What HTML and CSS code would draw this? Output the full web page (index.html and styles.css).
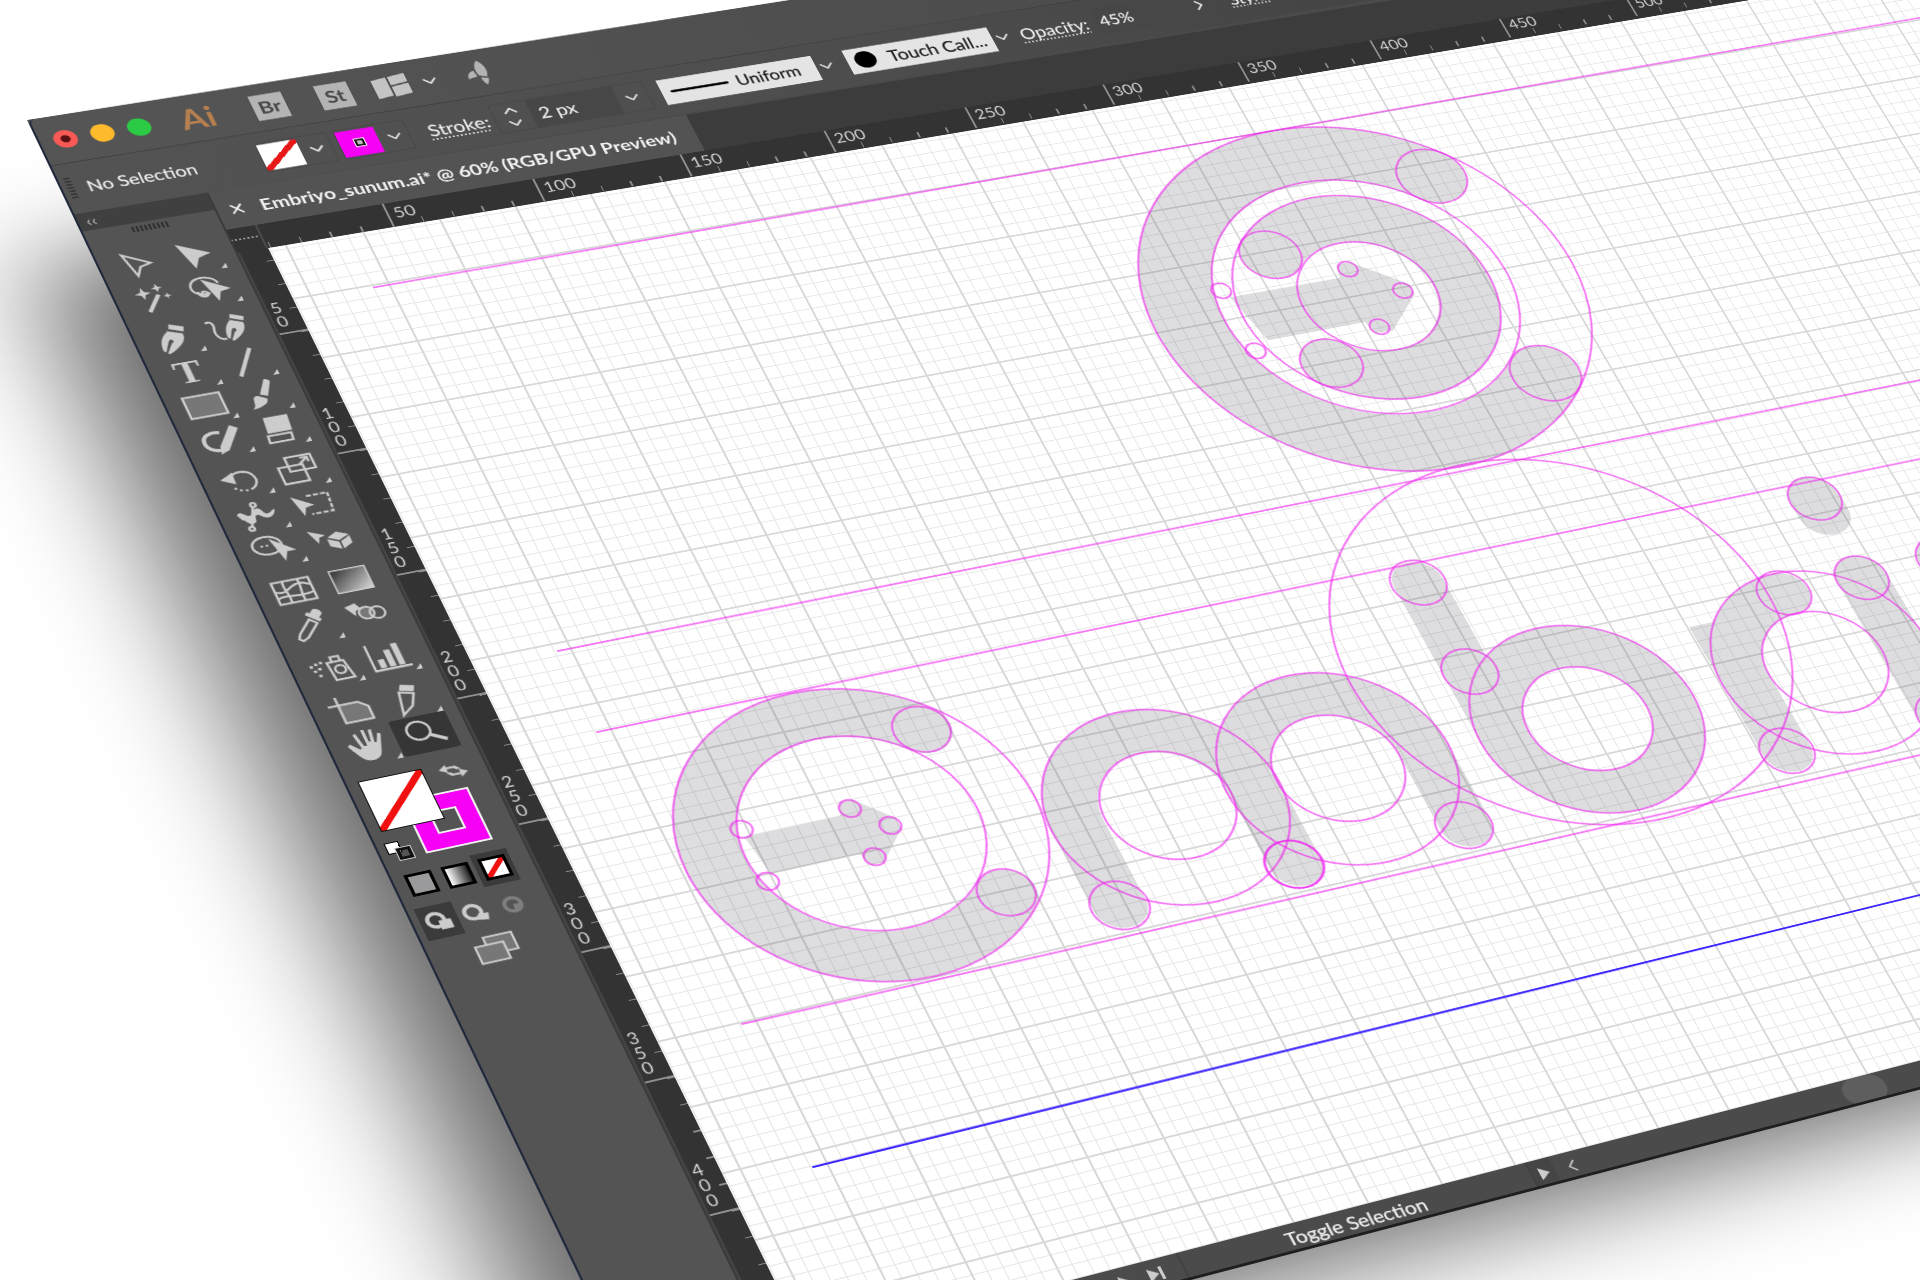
FILE: index.html
```html
<!DOCTYPE html>
<html lang="en">
<head>
    <meta charset="UTF-8">
    <meta name="viewport" content="width=device-width, initial-scale=1.0">
    <title>Embriyo_sunum.ai* @ 60% (RGB/GPU Preview)</title>
    <link rel="stylesheet" href="styles.css">
</head>
<body>
<div class="window">

    <!-- application bar -->
    <div class="appbar">
        <div class="lights"><i class="light red"></i><i class="light yellow"></i><i class="light green"></i></div>
        <div class="ai-logo">Ai</div>
        <div class="app-box br">Br</div>
        <div class="app-box st">St</div>
        <svg class="workspace" viewBox="0 0 36 30"><path d="M1 4l15-2v24l-15 2zM18 2l17-2v11l-17 2zM18 15l17-2v13l-17 2z"/></svg>
        <svg class="chev ws-chev" viewBox="0 0 14 8"><path d="M1 1l6 6 6-6"/></svg>
        <svg class="rocket" viewBox="0 0 28 34"><path d="M18 1c6 6 7 15 3 22l-7-3c-2-7-1-14 4-19zM12 21l-9 2c0-6 3-9 8-10zM15 23l7 2c-1 3-2 6-4 8-2-3-3-6-3-10z"/></svg>
    </div>

    <!-- control bar -->
    <div class="controlbar">
        <div class="grip"></div>
        <div class="ctl-label no-sel">No Selection</div>
        <div class="ctl-group g-fill">
            <div class="swatch-none"></div>
            <svg class="chev" viewBox="0 0 14 8"><path d="M1 1l6 6 6-6"/></svg>
        </div>
        <div class="ctl-group g-stroke">
            <div class="swatch-stroke"><i></i></div>
            <svg class="chev" viewBox="0 0 14 8"><path d="M1 1l6 6 6-6"/></svg>
        </div>
        <div class="ctl-label stroke-label dotted">Stroke:</div>
        <div class="ctl-group g-weight">
            <div class="stepper">
                <svg class="chev" viewBox="0 0 14 8"><path d="M1 7l6-6 6 6"/></svg>
                <svg class="chev" viewBox="0 0 14 8"><path d="M1 1l6 6 6-6"/></svg>
            </div>
            <div class="input">2 px</div>
            <svg class="chev" viewBox="0 0 14 8"><path d="M1 1l6 6 6-6"/></svg>
        </div>
        <div class="dropdown uniform"><i class="profile"></i><span>Uniform</span></div>
        <svg class="chev drop-chev" viewBox="0 0 14 8"><path d="M1 1l6 6 6-6"/></svg>
        <div class="dropdown touch"><i class="dot"></i><span>Touch Call...</span></div>
        <svg class="chev drop-chev" viewBox="0 0 14 8"><path d="M1 1l6 6 6-6"/></svg>
        <div class="ctl-label opacity-label dotted">Opacity:</div>
        <div class="input opacity-input">45%</div>
        <svg class="chev-right" viewBox="0 0 8 14"><path d="M1 1l6 6-6 6"/></svg>
        <div class="ctl-label style-label dotted">Style:</div>
    </div>

    <div class="main">

        <!-- tools panel -->
        <div class="toolbar">
            <div class="panel-head">&lsaquo;&lsaquo;</div>
            <div class="panel-grip"></div>

            <div class="tool-group first">
                <div class="tool"><svg viewBox="0 0 40 40"><path class="line" d="M9 5l24 15-11 3-6 11z"/></svg></div>
                <div class="tool more"><svg viewBox="0 0 40 40"><path d="M7 3l30 17-13 4-7 13z"/></svg></div>
                <div class="tool"><svg viewBox="0 0 40 40"><path class="line thick" d="M11 37l15-20"/><path d="M12 5l2 6 6 2-6 2-2 6-2-6-6-2 6-2zM27 3l1.500 4 4 1.500-4 1.500-1.500 4-1.500-4-4-1.500 4-1.500zM34 16l1 3 3 1-3 1-1 3-1-3-3-1 3-1z"/></svg></div>
                <div class="tool more"><svg viewBox="0 0 40 40"><path class="line" d="M19 26C8 28 1 22 3 14 5 6 16 3 24 7c4 2 6 5 6 8M8 22c-2 6 5 9 8 6 2-3-1-6-4-5-2 1 0 5 4 4"/><path d="M15 7l25 17-11 2-5 12z"/></svg></div>
            </div>

            <div class="tool-group">
                <div class="tool more"><svg viewBox="0 0 40 40"><path d="M22 2l13 6-2 6-13-6zM17 10l14 6c1 7-3 14-20 23l-2-1 8-12c2 0 3-2 2-4-1-1-3-1-4 1l-7 13-2-2c0-10 4-19 13-24z"/></svg></div>
                <div class="tool"><svg viewBox="0 0 40 40"><path d="M27 2l12 6-2 5-12-6zM23 9l13 6c0 7-3 14-16 21l-2-1 6-10c2 0 3-2 2-4-1-1-3-1-4 1l-5 11-2-2c0-9 3-16 10-22z"/><path class="line" d="M0 9c6-3 8 3 6 9-2 7 1 15 8 14"/></svg></div>
                <div class="tool more"><span class="type-glyph">T</span></div>
                <div class="tool more"><svg viewBox="0 0 40 40"><path class="line thick" d="M10 37L30 4"/></svg></div>
                <div class="tool more"><svg viewBox="0 0 40 40"><rect class="shade" x="2" y="7" width="36" height="27"/></svg></div>
                <div class="tool more"><svg viewBox="0 0 40 40"><path d="M29 1c3 0 5 2 5 4L26 22l-7-3zM16 20l8 5c0 6-7 10-18 11 5-3 4-8 5-11 0-3 2-5 5-5z"/></svg></div>
                <div class="tool more"><svg viewBox="0 0 40 40"><path class="line thick" d="M22 33C11 36 3 30 3 22c0-9 9-13 18-10"/><path d="M33 5l7 5-17 25-9 4 2-10z"/></svg></div>
                <div class="tool more"><svg viewBox="0 0 40 40"><path d="M11 4h24l-2 20H9z"/><path class="line" d="M8 27h23l-1 9H7z"/></svg></div>
            </div>

            <div class="tool-group">
                <div class="tool more"><svg viewBox="0 0 40 40"><path class="line" d="M10 15c8-8 20-6 23 2 3 7-1 13-5 15"/><path class="line dashed" d="M28 32c-7 3-14 1-18-5"/><path d="M1 16l14-7-1 15z"/></svg></div>
                <div class="tool more"><svg viewBox="0 0 40 40"><rect class="line" x="13" y="3" width="25" height="18"/><rect class="line" x="3" y="14" width="24" height="21"/><path class="line" d="M24 14l9-7M27 6h7v6"/></svg></div>
                <div class="tool more"><svg viewBox="0 0 40 40"><path d="M1 17c6-6 7 3 11 3 5 0 4-8 10-7 5 1 3 8 8 8 3 0 5-4 8-4-2 6-5 9-9 9-6 0-6-6-10-5-4 1 0 8-6 9-6 1-6-7-9-6z"/><circle class="line" cx="20" cy="8" r="2.500"/><circle class="line" cx="9" cy="36" r="2.500"/><path class="line" d="M19 10L10 34"/></svg></div>
                <div class="tool"><svg viewBox="0 0 40 40"><path d="M1 7l19 14-9 2-4 10z"/><path class="line dashed-box" d="M16 9h21l-2 23H14"/></svg></div>
                <div class="tool more"><svg viewBox="0 0 40 40"><ellipse class="line" cx="15" cy="15" rx="14" ry="11"/><circle cx="10" cy="15" r="1.300"/><circle cx="15" cy="15" r="1.300"/><path d="M19 7l21 19-9 0-5 11z"/></svg></div>
                <div class="tool"><svg viewBox="0 0 44 40"><path d="M1 6l17 9-7 2-3 8z"/><path d="M30 13l12 6-12 6-11-6zM18 21l11 6v10l-11-6zM31 27l11-6v10l-11 6z"/></svg></div>
            </div>

            <div class="tool-group">
                <div class="tool"><svg viewBox="0 0 40 40"><rect class="line" x="2" y="7" width="36" height="27"/><path class="line" d="M2 18c8 5 12 0 17-3s10-5 18 1M13 7c-3 9 3 18 0 27M27 7c3 9-3 18 0 27M2 27c10-5 20 3 36-2"/></svg></div>
                <div class="tool"><svg viewBox="0 0 40 40"><defs><linearGradient id="grad-tool" x1="0" y1="0" x2="1" y2="1"><stop offset="0" stop-color="#2e2e2e"/><stop offset="1" stop-color="#d8d8d8"/></linearGradient></defs><rect class="grad-rect" x="3" y="6" width="35" height="28" fill="url(#grad-tool)"/></svg></div>
                <div class="tool more"><svg viewBox="0 0 40 40"><path d="M28 2c4-1 8 3 7 7l-4 4 2 2-3 3-11-11 3-3 2 2z"/><path class="line" d="M21 13l6 6L13 34l-6 3-3-3 3-6z"/></svg></div>
                <div class="tool"><svg viewBox="0 0 44 40"><path d="M2 6l12-3 4 8-6 2-2 7z"/><circle class="shade" cx="22" cy="18" r="8"/><circle class="line" cx="33" cy="20" r="8"/></svg></div>
            </div>

            <div class="tool-group">
                <div class="tool more"><svg viewBox="0 0 40 40"><path d="M1 14h3v3H1zM6 12h3v3H6zM11 11h3v3h-3zM3 20h3v3H3zM8 18h3v3H8zM6 26h3v3H6z"/><path class="line" d="M18 14h16l4 22H20zM23 8h8v6h-8z"/><circle class="line" cx="28" cy="24" r="5"/></svg></div>
                <div class="tool more"><svg viewBox="0 0 40 40"><path class="line" d="M3 3v32h36"/><path d="M9 22h6v11H9zM18 12h6v21h-6zM27 6h6v27h-6z"/></svg></div>
            </div>

            <div class="tool-group">
                <div class="tool"><svg viewBox="0 0 40 40"><path class="line" d="M0 12h10M10 2v10"/><path class="shade" d="M10 12h19l8 7v15H10z"/></svg></div>
                <div class="tool more"><svg viewBox="0 0 40 40"><path d="M18 2l13 4-3 7-13-4z"/><path class="line" d="M14 11l13 4-6 14-12 9z"/></svg></div>
                <div class="tool more"><svg viewBox="0 0 40 40"><path d="M19 1h3v15h2l2-14h3l-2 16h2l4-10 3 1-6 19c-2 7-6 10-11 10-6 0-9-3-12-9L1 17l3-2 7 8 2-1-3-17 3-1 3 16h3z"/></svg></div>
                <div class="tool active"><svg viewBox="0 0 40 40"><circle class="line" cx="15" cy="15" r="11"/><path class="line thick" d="M24 22l14 9"/></svg></div>
            </div>

            <!-- fill and stroke -->
            <div class="fill-stroke">
                <div class="big-stroke"></div>
                <div class="big-fill"></div>
                <svg class="swap" viewBox="0 0 26 18"><path d="M1 6l7-5v3h8l4 4h-4l-2-2H8v4zM25 12l-7 5v-3h-8l-4-4h4l2 2h6V8z"/></svg>
                <div class="mini-default"><i></i><b></b></div>
            </div>

            <div class="mode-row">
                <div class="mode-cell"><i class="mode-color"></i></div>
                <div class="mode-cell"><i class="mode-grad"></i></div>
                <div class="mode-cell dark"><i class="mode-none"></i></div>
            </div>

            <div class="mode-row">
                <div class="mode-cell dark"><svg viewBox="0 0 30 26"><circle class="line thick" cx="12" cy="11" r="8"/><rect x="14" y="12" width="12" height="11"/></svg></div>
                <div class="mode-cell"><svg viewBox="0 0 30 26"><circle class="line thick" cx="12" cy="11" r="8"/><path d="M16 14l10 1-2 8-10-2z"/></svg></div>
                <div class="mode-cell dim"><svg viewBox="0 0 30 26"><circle class="line thick" cx="15" cy="12" r="8"/><path d="M15 12h8a8 8 0 0 1-8 8z"/></svg></div>
            </div>

            <svg class="screen-mode" viewBox="0 0 46 36"><rect class="shade" x="14" y="2" width="30" height="22"/><rect class="shade" x="2" y="12" width="30" height="22"/></svg>
        </div>

        <div class="document">
            <div class="tabs">
                <div class="tab"><span class="tab-x">&times;</span><span class="tab-title">Embriyo_sunum.ai* @ 60% (RGB/GPU Preview)</span></div>
            </div>

            <div class="ruler-row">
                <div class="ruler-corner"></div>
                <div class="ruler-top">
                    <div class="ruler-top-inner">
                        <div class="mark"></div><div class="mark">50</div><div class="mark">100</div><div class="mark">150</div><div class="mark">200</div><div class="mark">250</div><div class="mark">300</div><div class="mark">350</div><div class="mark">400</div><div class="mark">450</div><div class="mark">500</div>
                    </div>
                </div>
            </div>

            <div class="canvas-row">
                <div class="ruler-left">
                    <div class="ruler-left-inner">
                        <div class="mark-v"><span>5</span><span>0</span></div>
                        <div class="mark-v"><span>1</span><span>0</span><span>0</span></div>
                        <div class="mark-v"><span>1</span><span>5</span><span>0</span></div>
                        <div class="mark-v"><span>2</span><span>0</span><span>0</span></div>
                        <div class="mark-v"><span>2</span><span>5</span><span>0</span></div>
                        <div class="mark-v"><span>3</span><span>0</span><span>0</span></div>
                        <div class="mark-v"><span>3</span><span>5</span><span>0</span></div>
                        <div class="mark-v"><span>4</span><span>0</span><span>0</span></div>
                        <div class="mark-v"></div>
                        <div class="mark-v"></div>
                    </div>
                </div>
                <div class="canvas">
                    <svg class="art" width="2142" height="1310" viewBox="158 200 2142 1310">
                        <!-- letter bodies -->
                        <g class="bodies">
                            <path class="w73" d="M1305.4 357.6A191.5 191.5 0 1 0 1305.4 628.4"/>
                            <path class="w63" d="M1096.8 419.8A103.5 103.5 0 1 1 1096.8 566.2"/>
                            <polygon class="solid" points="1033,463 1153,464 1157,447 1172,447 1219,487 1219,501 1176,541 1157,540 1153,524 1047,524"/>

                            <path class="w57" d="M524 894A141.5 141.5 0 1 0 524 1094"/>
                            <polygon class="solid" points="319,970 412,970 417,955 430,955 460,985 460,998 430,1030 417,1030 412,1015 326,1015"/>

                            <path class="w52" d="M619 1134V1038A90 90 0 0 1 799 1038V1133"/>
                            <path class="w52" d="M797 1038A90 90 0 0 1 977 1038V1133"/>

                            <path class="w52" d="M1061 847V1045"/>
                            <circle class="w52" cx="1151" cy="1045" r="90"/>

                            <path class="w52" d="M1418 951A90 90 0 0 0 1328 1041V1133"/>
                            <rect class="solid" x="1302" y="966" width="40" height="75"/>

                            <path class="w56" d="M1505 846V866"/>
                            <path class="w56" d="M1505 952V1133"/>
                            <path class="w56" d="M1600 950V1133"/>
                        </g>

                        <!-- construction lines -->
                        <g class="guides">
                            <line x1="234" y1="268" x2="2300" y2="261"/>
                            <line x1="237" y1="724" x2="2300" y2="730"/>
                            <line x1="236" y1="822" x2="2300" y2="826"/>
                            <line x1="236" y1="1167" x2="2300" y2="1177"/>

                            <circle cx="1170" cy="493" r="228"/>
                            <circle cx="1170" cy="492" r="155"/>
                            <circle cx="1170" cy="493" r="135"/>
                            <circle cx="1172" cy="493" r="72"/>
                            <circle cx="1305.4" cy="357.6" r="36.5"/>
                            <circle cx="1305.4" cy="628.4" r="36.5"/>
                            <circle cx="1096.8" cy="419.8" r="31.5"/>
                            <circle cx="1096.8" cy="566.2" r="31.5"/>
                            <circle cx="1028" cy="453" r="10"/>
                            <circle cx="1029" cy="534" r="10"/>
                            <circle cx="1166" cy="455" r="10"/>
                            <circle cx="1209" cy="494" r="10"/>
                            <circle cx="1165" cy="533" r="10"/>

                            <circle cx="424" cy="994" r="170"/>
                            <circle cx="424" cy="993" r="113"/>
                            <circle cx="524" cy="894" r="27"/>
                            <circle cx="524" cy="1092" r="27"/>
                            <circle cx="320" cy="961" r="10"/>
                            <circle cx="320" cy="1023" r="10"/>
                            <circle cx="424" cy="964" r="10"/>
                            <circle cx="452" cy="992" r="10"/>
                            <circle cx="424" cy="1022" r="10"/>

                            <circle cx="709" cy="1038" r="116"/>
                            <circle cx="711" cy="1037" r="64"/>
                            <circle cx="619" cy="1134" r="28"/>
                            <circle cx="798" cy="1133" r="28"/>
                            <circle cx="797" cy="1133" r="28"/>
                            <circle cx="887" cy="1038" r="116"/>
                            <circle cx="887" cy="1038" r="64"/>
                            <circle cx="975.5" cy="1133" r="28"/>

                            <circle cx="1171" cy="948" r="229"/>
                            <circle cx="1151" cy="1045" r="116"/>
                            <circle cx="1151" cy="1045" r="64"/>
                            <circle cx="1061" cy="847" r="28"/>
                            <circle cx="1062.7" cy="962" r="28"/>

                            <circle cx="1418" cy="1041" r="116"/>
                            <circle cx="1418" cy="1041" r="64"/>
                            <circle cx="1417" cy="950" r="28"/>
                            <circle cx="1328" cy="1133" r="28"/>

                            <circle cx="1505" cy="846" r="28"/>
                            <circle cx="1505" cy="952" r="28"/>
                            <circle cx="1505" cy="1133" r="28"/>
                            <circle cx="1600" cy="950" r="28"/>
                        </g>

                        <line class="base-blue" x1="236" y1="1331" x2="2300" y2="1329"/>
                    </svg>
                </div>
            </div>

            <div class="statusbar">
                <svg class="nav-icon play" viewBox="0 0 12 16"><path d="M1 1l10 7-10 7z"/></svg>
                <svg class="nav-icon last" viewBox="0 0 16 16"><path d="M1 1l10 7-10 7zM12 1h3v14h-3z"/></svg>
                <div class="status-text">Toggle Selection</div>
                <div class="status-cell"><svg class="nav-icon" viewBox="0 0 12 16"><path d="M1 1l10 7-10 7z"/></svg></div>
                <svg class="status-back" viewBox="0 0 8 14"><path d="M7 1L1 7l6 6"/></svg>
                <div class="scroll-thumb"></div>
            </div>
        </div>
    </div>
</div>
</body>
</html>
```

FILE: styles.css
```css
html, body { margin: 0; height: 1280px; overflow: hidden; background: #fff; }
body { font-family: Lato, "Open Sans", sans-serif; color: #f0f0f0; }
i { display: block; }

/* flat window, tilted onto the page as one plane */
.window {
    position: absolute; left: 0; top: 0;
    width: 2300px; height: 1541px;
    display: flex; flex-direction: column;
    background: #535353;
    border-radius: 7px 0 0 0;
    transform-origin: 0 0;
    transform: matrix3d(1.0636, -0.1555, 0, 0.0000769, 0.3664, 0.764, 0, -0.0000568, 0, 0, 1, 0, 27, 120, 0, 1);
}
.window::before {
    content: ""; position: absolute; z-index: -1;
    left: -60px; top: 175px; right: 0; bottom: -22px;
    background: rgba(0, 0, 0, .6);
    filter: blur(58px);
}
.window::after {
    content: ""; position: absolute; inset: 0;
    border-left: 2px solid #20283c;
    border-bottom: 3px solid #1f1f1f;
    border-radius: 7px 0 0 0;
    pointer-events: none;
}

.chev { width: 14px; height: 8px; flex: none; fill: none; stroke: #dedede; stroke-width: 2; }
.chev-right { width: 8px; height: 14px; flex: none; fill: none; stroke: #dedede; stroke-width: 2; margin-left: 11px; }

/* application bar */
.appbar { height: 60px; flex: none; display: flex; align-items: center; border-bottom: 1px solid #3e3e3e; box-sizing: border-box; background: linear-gradient(90deg, #555 0, #4c4c4c 1100px, #434343 100%); transform: skewY(-.16deg); transform-origin: 0 0; }
.lights { display: flex; gap: 13px; margin-left: 15px; }
.light { width: 22px; height: 22px; border-radius: 50%; }
.red { background: radial-gradient(circle, #5a1010 0 4px, #f95a55 5px); }
.yellow { background: #fdbb2c; }
.green { background: #2ccb45; }
.ai-logo { width: 40px; margin-left: 25px; text-align: center; font-size: 35px; font-weight: 700; line-height: 1; color: #b57f50; }
.app-box { width: 32px; height: 32px; background: #b4b4b4; color: #484848; font-size: 21px; font-weight: 700; line-height: 32px; text-align: center; }
.br { margin-left: 34px; }
.st { margin-left: 32px; }
.workspace { width: 36px; height: 30px; margin-left: 22px; fill: #c4c4c4; flex: none; }
.ws-chev { margin-left: 13px; }
.rocket { width: 28px; height: 36px; margin-left: 27px; fill: #b4b4b4; flex: none; }

/* control bar */
.controlbar { height: 62px; flex: none; display: flex; align-items: center; background: linear-gradient(90deg, #535353 0, #4d4d4d 800px, #454545 1300px); font-size: 18.5px; -webkit-text-stroke: .25px currentColor; transform: skewY(-.16deg); transform-origin: 0 0; }
.grip { width: 6px; height: 28px; margin-left: 7px; flex: none; background: repeating-linear-gradient(#383838 0 2px, transparent 2px 4px); }
.ctl-label { flex: none; white-space: nowrap; }
.no-sel { margin-left: 12px; width: 109px; }
.ctl-group { display: flex; align-items: center; height: 38px; flex: none; border: 1px solid #474747; box-sizing: border-box; border-radius: 3px; }
.g-fill { margin-left: 57px; width: 70px; }
.g-stroke { margin-left: 6px; width: 70px; }
.g-fill .chev, .g-stroke .chev { margin-left: 9px; }
.swatch-none { width: 38px; height: 33px; flex: none; background: linear-gradient(to bottom right, #fff 44%, #e81818 44% 56%, #fff 56%); }
.swatch-stroke { width: 38px; height: 33px; flex: none; background: #f600f6; display: flex; align-items: center; justify-content: center; }
.swatch-stroke i { width: 5px; height: 5px; border: 2px solid #111; outline: 1.5px solid #fff; background: #bbb; }
.stroke-label { margin-left: 18px; width: 62px; font-size: 20px; }
.dotted { text-decoration: underline dotted #ccc; text-underline-offset: 3px; }
.g-weight { margin-left: 4px; width: 157px; }
.stepper { width: 36px; display: flex; flex-direction: column; gap: 8px; align-items: center; flex: none; }
.input { background: #474747; height: 36px; line-height: 36px; box-sizing: border-box; padding-left: 9px; flex: none; }
.g-weight .input { width: 88px; padding-left: 8px; font-size: 20px; }
.g-weight > .chev { margin-left: 8px; }
.dropdown { display: flex; align-items: center; height: 33px; background: #e4e4e4; color: #1d1d1d; flex: none; box-sizing: border-box; }
.uniform { margin-left: 13px; width: 161px; padding-left: 9px; }
.profile { width: 60px; height: 3px; background: #000; margin-right: 8px; border-radius: 2px; }
.touch { margin-left: 15px; width: 155px; padding-left: 8px; font-size: 20px; }
.dot { width: 22px; height: 22px; background: #000; border-radius: 50%; margin-right: 13px; }
.drop-chev { margin-left: 4px; }
.opacity-label { margin-left: 12px; width: 80px; font-size: 20px; }
.opacity-input { margin-left: 2px; width: 100px; padding-left: 5px; }
.style-label { margin-left: 30px; }

.main { flex: 1; display: flex; min-height: 0; }

/* tools panel */
.toolbar { width: 127px; flex: none; background: #545454; box-shadow: 2px 0 0 #3b3b3b; }
.panel-head { height: 22px; background: #404040; color: #bbb; font-size: 18px; line-height: 20px; padding-left: 9px; }
.panel-grip { width: 36px; height: 7px; margin: 4px auto 0; background: repeating-linear-gradient(90deg, #2f2f2f 0 2px, transparent 2px 4px); }
.tool-group { display: grid; grid-template-columns: 53px 53px; grid-auto-rows: 42px; padding: 0 0 0 9px; margin-top: 9px; }
.tool-group.first { margin-top: 18px; }
.tool { position: relative; display: flex; align-items: center; justify-content: center; }
.tool svg { width: 38px; height: 38px; fill: #cccccc; overflow: visible; }
.tool .line, .mode-cell .line { fill: none; stroke: #cccccc; stroke-width: 2.4; }
.tool .thick, .mode-cell .thick { stroke-width: 4; }
.tool .dashed { stroke-dasharray: 2.5 3; }
.tool .dashed-box { stroke-dasharray: 5 2; }
.tool .shade, .screen-mode .shade { fill: #777; stroke: #cccccc; stroke-width: 2.4; }
.grad-rect { stroke: #cccccc; stroke-width: 1.5; }
.tool.more::after { content: ""; position: absolute; right: 1px; bottom: 0; border-left: 6px solid transparent; border-bottom: 6px solid #cccccc; }
.tool.active { background: #363636; border-radius: 3px; }
.type-glyph { font-family: "Liberation Serif", serif; font-weight: 700; font-size: 38px; line-height: 1; color: #cccccc; }

.fill-stroke { position: relative; height: 120px; }
.big-fill { position: absolute; left: 12px; top: 16px; width: 59px; height: 59px; box-sizing: border-box; border: 1px solid #111; background: linear-gradient(to bottom right, #fff 46%, #f01010 46% 54%, #fff 54%); }
.big-stroke { position: absolute; left: 42px; top: 47px; width: 60px; height: 60px; box-sizing: border-box; border: 17px solid #f600f6; outline: 2px solid #f0f0f0; outline-offset: -1px; box-shadow: inset 0 0 0 2px #f0f0f0; }
.swap { position: absolute; left: 84px; top: 16px; width: 27px; height: 19px; fill: #cccccc; }
.mini-default { position: absolute; left: 9px; top: 88px; width: 20px; height: 20px; }
.mini-default i { width: 11px; height: 11px; background: #fff; border: 1px solid #000; }
.mini-default b { display: block; position: absolute; left: 8px; top: 8px; width: 7px; height: 7px; border: 3px solid #111; outline: 1px solid #ccc; }

.mode-row { display: grid; grid-template-columns: 34px 34px 34px; margin: 0 0 7px 8px; height: 37px; }
.mode-cell { display: flex; align-items: center; justify-content: center; }
.mode-cell.dark { background: #3b3b3b; }
.mode-cell svg { width: 28px; height: 25px; fill: #cccccc; }
.mode-cell.dim svg { opacity: .35; }
.mode-color, .mode-grad, .mode-none { width: 25px; height: 25px; box-sizing: border-box; border: 3px solid #000; }
.mode-color { background: #9a9a9c; }
.mode-grad { background: linear-gradient(90deg, #fff, #222); }
.mode-none { background: linear-gradient(to bottom right, #fff 40%, #f01010 40% 60%, #fff 60%); }
.screen-mode { display: block; width: 40px; height: 31px; margin: 4px 0 0 42px; }

/* document area */
.document { flex: 1; margin-left: 2px; display: flex; flex-direction: column; min-width: 0; }
.tabs { height: 48px; flex: none; background: #3c3c3c; }
.tab { width: 474px; height: 48px; background: #535353; display: flex; align-items: center; font-size: 19.6px; font-weight: 700; color: #f2f2f2; white-space: nowrap; }
.tab-x { margin-left: 11px; width: 30px; font-size: 26px; font-weight: 400; flex: none; }

.ruler-row { height: 30px; flex: none; display: flex; background: #333; }
.ruler-corner { width: 29px; flex: none; box-sizing: border-box; border-right: 2px solid #4b4b4b; background-image: radial-gradient(#9a9a9a 1px, transparent 1px); background-size: 4px 4px; background-position: 10px 12px; background-repeat: repeat-x; }
.ruler-top { flex: 1; overflow: hidden; }
.ruler-top-inner {
    display: flex; margin-left: -28px; height: 30px;
    transform: skewY(-.16deg); transform-origin: 0 0;
    background: repeating-linear-gradient(90deg, #8c8c8c 0 1.5px, transparent 1.5px 29.8px) left bottom / 100% 7px no-repeat;
}
.mark { width: 149px; flex: none; box-sizing: border-box; border-left: 2px solid #909090; padding-left: 5px; font-size: 18px; line-height: 26px; color: #d4d4d4; }

.canvas-row { flex: 1; display: flex; min-height: 0; }
.ruler-left { width: 29px; flex: none; background: #333; overflow: hidden; box-sizing: border-box; border-left: 2px solid #454545; }
.ruler-left-inner {
    margin-top: -45.5px;
    background: repeating-linear-gradient(#8c8c8c 0 1.5px, transparent 1.5px 30px) right top / 7px 100% no-repeat;
}
.mark-v { height: 150px; box-sizing: border-box; border-bottom: 2px solid #909090; display: flex; flex-direction: column; justify-content: flex-end; padding: 0 0 5px 3px; font-size: 17px; line-height: 17px; color: #d4d4d4; }

.canvas {
    flex: 1; position: relative; overflow: hidden; background-color: #fff;
    background-image:
        linear-gradient(90deg, #d8d8d8 1.8px, transparent 1.8px),
        linear-gradient(#d8d8d8 1.8px, transparent 1.8px),
        linear-gradient(90deg, #e6e6e6 1.4px, transparent 1.4px),
        linear-gradient(#e6e6e6 1.4px, transparent 1.4px);
    background-size: 75px 75px, 75px 75px, 15px 15px, 15px 15px;
    background-position: 16px 64px;
}
.art { position: absolute; left: 0; top: 0; }
.bodies { opacity: .2; fill: none; stroke: #5a565e; stroke-linecap: round; }
.bodies .w73 { stroke-width: 73; }
.bodies .w63 { stroke-width: 63; }
.bodies .w57 { stroke-width: 57; }
.bodies .w52 { stroke-width: 52; }
.bodies .w56 { stroke-width: 56; }
.bodies .solid { fill: #5a565e; stroke: none; }
.guides { fill: none; stroke: #f020f0; stroke-width: 2; stroke-opacity: .62; }
.base-blue { stroke: #3a25ff; stroke-width: 2.2; }

.statusbar { height: 31px; flex: none; display: flex; align-items: center; background: #4b4b4b; font-size: 19.8px; -webkit-text-stroke: .25px currentColor; }
.nav-icon { height: 16px; width: 12px; fill: #cccccc; flex: none; }
.play { margin-left: 317px; }
.last { margin-left: 16px; width: 16px; }
.status-text { margin-left: 18px; padding-left: 100px; width: 351px; flex: none; border-left: 2px solid #414141; line-height: 31px; box-sizing: border-box; white-space: nowrap; }
.status-cell { width: 25px; height: 31px; display: flex; align-items: center; justify-content: center; flex: none; border-left: 2px solid #414141; box-sizing: border-box; background: #454545; }
.status-back { width: 8px; height: 14px; fill: none; stroke: #cccccc; stroke-width: 1.6; margin-left: 14px; flex: none; }
.scroll-thumb { width: 46px; height: 31px; border-radius: 20px; background: #5e5e5e; margin-left: 285px; flex: none; }
```
